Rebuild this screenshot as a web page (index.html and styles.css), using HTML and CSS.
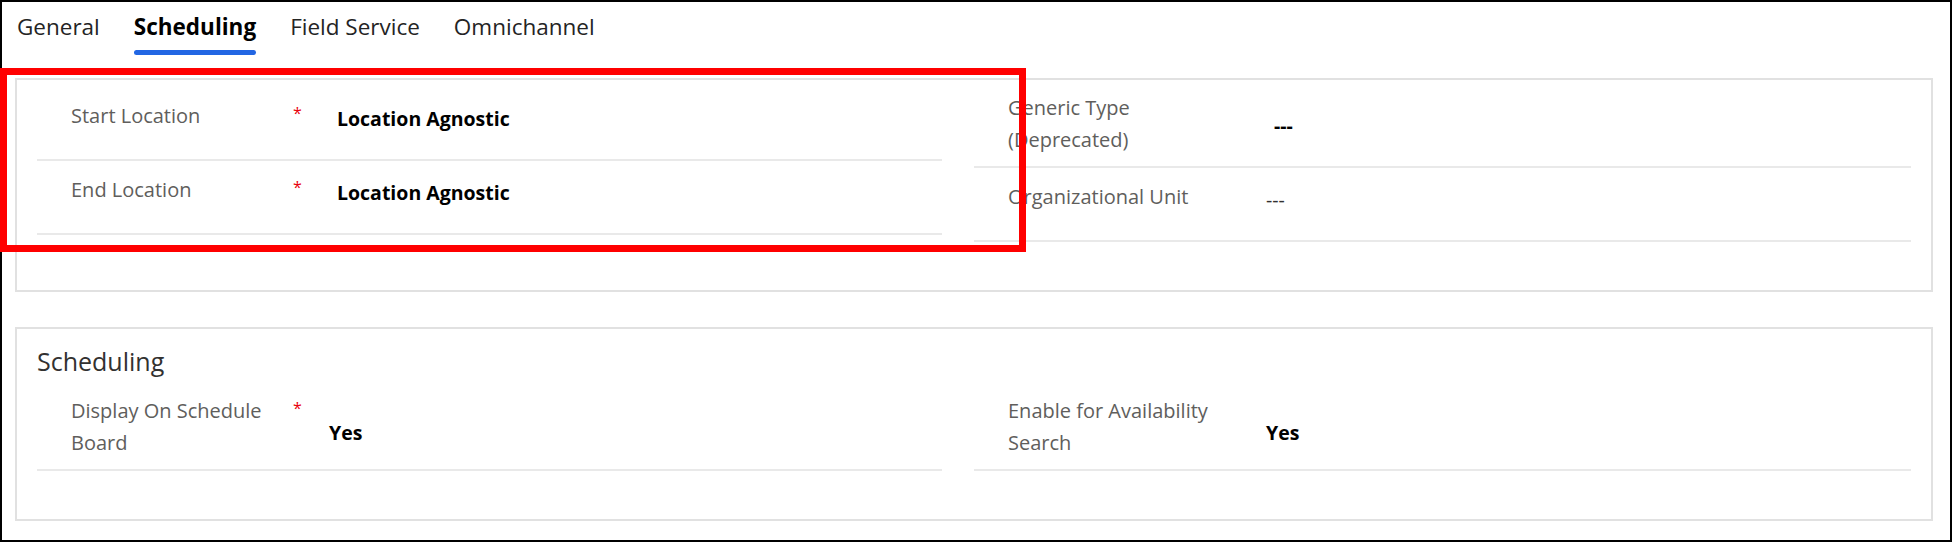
FILE: index.html
```html
<!DOCTYPE html>
<html lang="en">
<head>
<meta charset="utf-8">
<title>Scheduling</title>
<link rel="stylesheet" href="styles.css">
</head>
<body>
<div class="frame">
  <nav class="tabs">
    <div class="tab">General</div>
    <div class="tab active">Scheduling</div>
    <div class="tab">Field Service</div>
    <div class="tab">Omnichannel</div>
  </nav>

  <section class="card card-top">
    <div class="cols">
      <div class="col col-left">
        <div class="row">
          <div class="label">Start Location</div>
          <div class="req">*</div>
          <div class="value lookup">Location Agnostic</div>
        </div>
        <div class="row">
          <div class="label">End Location</div>
          <div class="req">*</div>
          <div class="value lookup">Location Agnostic</div>
        </div>
      </div>
      <div class="col">
        <div class="row row-tall">
          <div class="label">Generic Type (Deprecated)</div>
          <div class="req"></div>
          <div class="value lookup">---</div>
        </div>
        <div class="row">
          <div class="label">Organizational Unit</div>
          <div class="req"></div>
          <div class="value empty">---</div>
        </div>
      </div>
    </div>
  </section>

  <section class="card card-sched">
    <h2 class="card-title">Scheduling</h2>
    <div class="cols">
      <div class="col col-left">
        <div class="row row-tall">
          <div class="label">Display On Schedule Board</div>
          <div class="req">*</div>
          <div class="value">Yes</div>
        </div>
      </div>
      <div class="col">
        <div class="row row-tall">
          <div class="label">Enable for Availability Search</div>
          <div class="req"></div>
          <div class="value">Yes</div>
        </div>
      </div>
    </div>
  </section>

  <div class="highlight"></div>
</div>
</body>
</html>
```

FILE: styles.css
```css
* {
  box-sizing: border-box;
}

body {
  margin: 0;
  background: #fff;
  font-family: "Open Sans", "Noto Sans", sans-serif;
}

.frame {
  position: relative;
  width: 1952px;
  height: 542px;
  border: 2px solid #000;
  padding: 10px 17px 0 13px;
}

/* Tabs */
.tabs {
  display: flex;
  gap: 34px;
  padding-left: 2px;
}

.tab {
  display: flex;
  flex-direction: column;
  font-size: 22.5px;
  line-height: 30px;
  color: #242424;
}

.tab::after {
  content: "";
  height: 5px;
  margin-top: 8px;
  border-radius: 3px;
  background: transparent;
}

.tab.active {
  font-weight: 700;
  color: #000;
}

.tab.active::after {
  background: #2266e3;
}

/* Cards */
.card {
  border: 2px solid #e1e1e1;
  padding: 7px 20px 48px;
}

.card-top {
  margin-top: 23px;
}

.card-sched {
  margin-top: 35px;
  padding-top: 15px;
}

.card-title {
  margin: 0 0 12px;
  font-size: 25px;
  line-height: 34px;
  font-weight: 400;
  color: #323130;
}

.cols {
  display: grid;
  grid-template-columns: 1fr 1fr;
}

.col-left {
  padding-right: 32px;
}

/* Field rows */
.row {
  display: flex;
  align-items: flex-start;
  min-height: 74px;
  padding: 13px 0 0 34px;
  border-bottom: 2px solid #e9e9e9;
}

.row-tall {
  padding-top: 5px;
  padding-bottom: 10px;
}

.label {
  flex: none;
  width: 222px;
  font-size: 20px;
  line-height: 32px;
  color: #605e5c;
}

.req {
  flex: none;
  width: 36px;
  font-size: 16px;
  line-height: 26px;
  color: #e8000b;
}

.value {
  margin-top: 3px;
  font-size: 19.5px;
  line-height: 32px;
  font-weight: 700;
  color: #000;
}

.row-tall .value {
  margin-top: 22px;
}

.row-tall .value.lookup {
  margin-top: 18px;
}

.value.lookup {
  padding-left: 8px;
}

.value.empty {
  font-weight: 400;
  color: #323130;
}

/* Annotation overlay */
.highlight {
  position: absolute;
  left: -2px;
  top: 66px;
  width: 1026px;
  height: 184px;
  border: 7px solid #ff0000;
  pointer-events: none;
}
```
